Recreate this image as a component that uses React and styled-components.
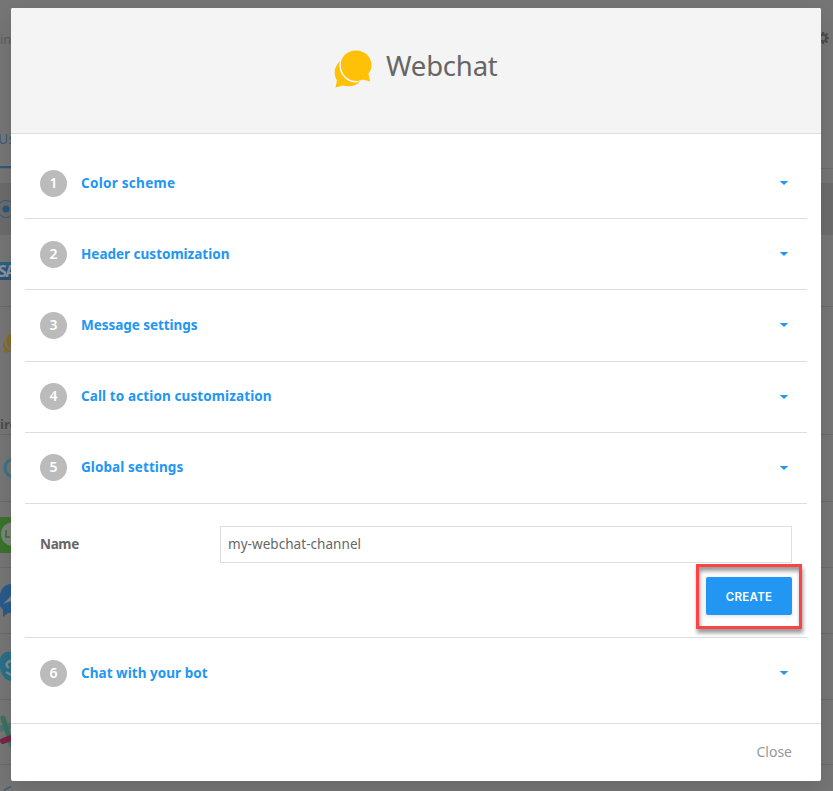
import React from "react";
import styled, { createGlobalStyle } from "styled-components";

const Global = createGlobalStyle`
  *{box-sizing:border-box}
  body{margin:0;background:#757575;font-family:"Noto Sans","Open Sans",sans-serif;overflow:hidden}
  #root{height:791px}
`;
const Page = styled.div`
  position: relative; height: 791px; width: 833px; overflow: hidden;
  background: #757575; display: flex; flex-direction: column;
`;
const BackRow = styled.div`
  height: ${p => p.$h}px; flex: none; display: flex; justify-content: space-between;
  align-items: ${p => p.$align || "center"};
  border-bottom: 1px solid ${p => p.$line || "#6b6b6b"};
  background: ${p => p.$bg || "transparent"};
`;
const BackIcon = styled.svg`display: block; flex: none; width: 11px; height: ${p => p.$h}px; overflow: hidden;`;
const GearIcon = styled.svg`display: block; flex: none; width: 12px; height: 14px;`;
const BackText = styled.div`
  white-space: nowrap; line-height: 20px; flex: none;
  font-size: ${p => p.$size || 13}px; font-weight: ${p => p.$bold ? 700 : 400};
  color: ${p => p.$color || "#4c4c4c"};
`;
const BackTab = styled(BackText)`
  margin-left: -2px; height: 40px; padding-top: 1px; border-bottom: 2px solid #31587a;
  color: #3d5a7a; font-size: 14px;
`;
const SapLogo = styled.div`
  width: 36px; height: 18px; line-height: 18px; text-indent: -2px;
  background: linear-gradient(#2a6285, #304d7c); color: #8b9299;
  font-size: 16px; font-weight: 700; letter-spacing: -1.5px;
`;
const Modal = styled.section`
  position: absolute; left: 11px; top: 8px; width: 810px; height: 773px;
  background: #fff; border-radius: 2px; overflow: hidden;
  display: flex; flex-direction: column;
`;
const Halo = styled.div`
  position: absolute; left: 11px; top: 8px; width: 810px; height: 773px;
  box-shadow: 0 9px 18px rgba(0,0,0,.1);
`;
const Header = styled.header`
  height: 126px; flex: none; background: #f4f4f4; border-bottom: 1px solid #dedede;
  display: flex; padding: 42px 0 0 323px; align-items: flex-start;
`;
const Logo = styled.svg`width: 38px; height: 38px; display: block; flex: none;`;
const Title = styled.h1`
  margin: -4px 0 0 14px; font-size: 27.5px; line-height: 40px; font-weight: 400; color: #666;
  letter-spacing: ${p => p.$ls}px; white-space: nowrap;
`;
const Body = styled.main`
  height: 589px; flex: none; padding: 14px 14px 0; display: flex; flex-direction: column;
`;
const Row = styled.div`
  height: ${p => p.$h}px; flex: none; display: flex; align-items: flex-start;
  padding: ${p => p.$top}px 18px 0 15px; border-bottom: ${p => p.$last ? "0" : "1px solid #dedede"};
`;
const Badge = styled.span`
  width: 27px; height: 27px; border-radius: 50%; background: #bbb; color: #fff;
  font-size: 14px; font-weight: 600; line-height: 26px; text-align: center;
`;
const Label = styled.span`
  margin-left: 14px; flex: 1; font-size: 13.5px; line-height: 27px; font-weight: 700; color: #2196f3;
  white-space: nowrap; letter-spacing: ${p => p.$ls}px;
`;
const Caret = styled.svg`width: 10px; height: 4px; margin-top: ${p => p.$top}px; display: block;`;
const Form = styled.div`
  height: 134px; flex: none; border-bottom: 1px solid #dedede; padding: 22px 15px 0;
`;
const Field = styled.label`display: flex; height: 37px; align-items: center;`;
const FieldName = styled.span`
  width: 180px; padding-bottom: 1px; font-size: 13.5px; font-weight: 700; color: #666; letter-spacing: ${p => p.$ls}px;
`;
const Input = styled.input`
  width: 572px; height: 37px; border: 1px solid #dedede; border-radius: 0; background: #fff;
  padding: 0 7px 1px; font: 400 13.5px "Noto Sans", sans-serif; color: #666; outline: 0;
  letter-spacing: ${p => p.$ls}px;
`;
const Actions = styled.div`display: flex; justify-content: flex-end; padding-top: 1px;`;
const Highlight = styled.div`
  margin-right: -10px; width: 106px; height: 65px; border: 3px solid #ff4343;
  padding: 10px 7px;
  box-shadow: 1px 4px 4px rgba(0,0,0,.4), inset 1px 4px 4px rgba(0,0,0,.4);
`;
const CreateButton = styled.button`
  display: block; width: 86px; height: 38px; border: 0; border-radius: 2px; padding: 2px 0 0;
  background: #2196f3; color: #fff; font: 600 11.5px Inter, "Noto Sans", sans-serif; letter-spacing: ${p => p.$ls}px;
  box-shadow: 0 1px 4px rgba(0,0,0,.14);
`;
const Footer = styled.footer`
  flex: 1; border-top: 1px solid #dedede; display: flex; justify-content: flex-end; padding: 18px 29px 0 0;
`;
const Close = styled.button`
  border: 0; background: none; padding: 0; height: 20px; color: #999;
  font: 400 14px/20px "Noto Sans", sans-serif; letter-spacing: ${p => p.$ls}px;
`;

const Step = ({ n, label, h, ls, last, top = 22 }) => (
  <Row $h={h} $last={last} $top={top}>
    <Badge>{n}</Badge>
    <Label $ls={ls}>{label}</Label>
    <Caret $top={33 - top} viewBox="0 0 10 4"><path d="M.7 0h8.6L5 4z" fill="#2196f3" /></Caret>
  </Row>
);

export default function App() {
  return (
    <>
      <Global />
      <Page>
        <BackRow $h={78} $line="transparent">
          <BackText $color="#5c5c5c">in</BackText>
          <GearIcon viewBox="0 0 12 14">
            <circle cx="2" cy="6" r="3.4" fill="none" stroke="#4d4d4d" strokeWidth="2.4" />
            <path d="M2 0v3M2 9v3M5 6h3M4.500 3.500l2-2M4.500 8.500l2 2" stroke="#4d4d4d" strokeWidth="2.200" />
          </GearIcon>
        </BackRow>
        <BackRow $h={91} $align="flex-end">
          <BackTab>Us</BackTab>
        </BackRow>
        <BackRow $h={14} $line="transparent" />
        <BackRow $h={52} $bg="#6b6b6b">
          <BackIcon $h={20} viewBox="0 0 11 20">
            <circle cx="6" cy="10" r="8.500" fill="none" stroke="#315b80" />
            <circle cx="6" cy="10" r="3.500" fill="#265680" />
          </BackIcon>
        </BackRow>
        <BackRow $h={72}>
          <SapLogo>SAP</SapLogo>
        </BackRow>
        <BackRow $h={73} $line="transparent">
          <BackIcon $h={22} viewBox="0 0 11 22">
            <path d="M4.500 8C2.500 12 3 15 4.500 17L4 21l4-1.300 3 .8V19C6 16 4.500 13 4.500 8z" fill="#846b2a" />
            <path d="M14 0C5 2 5 10 8 14l5 4z" fill="#846b2a" />
          </BackIcon>
        </BackRow>
        <BackRow $h={55} $align="flex-end">
          <BackText $bold $size={13}>ire</BackText>
        </BackRow>
        <BackRow $h={67}>
          <BackIcon $h={22} viewBox="0 0 11 22"><circle cx="14" cy="11" r="9" fill="none" stroke="#397385" strokeWidth="3" /></BackIcon>
        </BackRow>
        <BackRow $h={66}>
          <BackIcon $h={36} viewBox="0 0 11 36">
            <path d="M0 0h11v36H0z" fill="#39722b" /><circle cx="13" cy="17" r="12" fill="#7b837b" />
            <path d="M6 13v7h4" fill="none" stroke="#39722b" strokeWidth="1.600" />
          </BackIcon>
        </BackRow>
        <BackRow $h={66}>
          <BackIcon $h={36} viewBox="0 0 11 36">
            <path d="M11 1C5 1 0 6 0 13v10l3 4v7l5-4h3z" fill="#295a8c" /><path d="M3 21l8-8v5z" fill="#7a8289" />
          </BackIcon>
        </BackRow>
        <BackRow $h={66}>
          <BackIcon $h={34} viewBox="0 0 11 34">
            <path d="M11 2C8 1 0 2 0 11c-1 10 3 19 11 20z" fill="#286f87" />
            <path d="M11 11c-5 1-6 5-2 7M6 22l5 3" fill="none" stroke="#7c898c" strokeWidth="2.500" />
          </BackIcon>
        </BackRow>
        <BackRow $h={65}>
          <BackIcon $h={36} viewBox="0 0 11 36">
            <path d="M0 15l11-4" stroke="#4c7277" strokeWidth="6" />
            <path d="M3 4l9 28" stroke="#39725d" strokeWidth="5" strokeLinecap="round" />
            <path d="M3 27l8-3" stroke="#792346" strokeWidth="6" strokeLinecap="round" />
          </BackIcon>
        </BackRow>
        <BackRow $h={28} $align="flex-end" $line="transparent">
          <BackIcon $h={6} viewBox="0 0 11 6"><path d="M4 5C6 2.500 9 1 12 1" fill="none" stroke="#415d70" strokeWidth="1.500" /></BackIcon>
        </BackRow>
      </Page>
      <Halo />
      <Modal>
        <Header>
          <Logo viewBox="0 0 38 38">
            <path d="M6 11.500C-1 17 0 27 3 30L1.500 37.500 9 35.500c7 2 14 0 17-4C15 32 6 25 6 11.500z" fill="#ffc107" />
            <path d="M22 .5C13 .5 6.500 7 6.500 15.500S13 31 22 31c2.500 0 5-.7 7-1.500l7.200 2-1.800-7.800c2-2.500 3.100-5 3.100-8.200C37.500 7 31 .5 22 .5z" fill="#ffc107" />
            <path d="M6.200 13C5.200 24 13 32.500 24 31.700" fill="none" stroke="#f4f4f4" strokeWidth="1.500" />
          </Logo>
          <Title $ls={-0.2}>Webchat</Title>
        </Header>
        <Body>
          <Step n="1" label="Color scheme" h={71} ls={0.28} />
          <Step n="2" label="Header customization" h={71} ls={0} />
          <Step n="3" label="Message settings" h={72} ls={-0.04} />
          <Step n="4" label="Call to action customization" h={71} ls={0.11} top={21} />
          <Step n="5" label="Global settings" h={71} ls={0.08} top={21} />
          <Form>
            <Field><FieldName $ls={-0.35}>Name</FieldName><Input $ls={0.05} defaultValue="my-webchat-channel" /></Field>
            <Actions><Highlight><CreateButton $ls={0.3}>CREATE</CreateButton></Highlight></Actions>
          </Form>
          <Step n="6" label="Chat with your bot" h={71} ls={0.04} last />
        </Body>
        <Footer><Close $ls={0}>Close</Close></Footer>
      </Modal>
    </>
  );
}
